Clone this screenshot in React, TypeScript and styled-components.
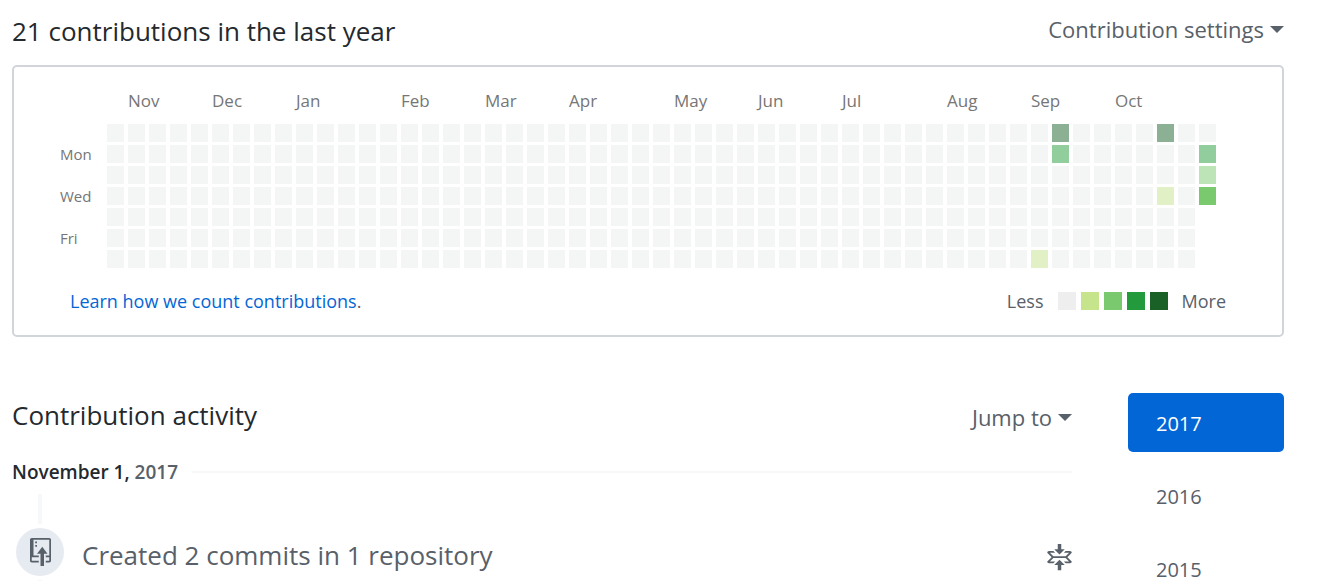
import React from 'react';
import styled, { createGlobalStyle } from 'styled-components';

const GlobalStyle = createGlobalStyle`
  * { box-sizing: border-box; }
  body {
    margin: 0;
    background: #fff;
    color: #24292e;
    font-family: 'Segoe UI', 'Open Sans', 'Noto Sans', sans-serif;
    font-size: 20px;
    line-height: 32px;
  }
  button { font: inherit; color: inherit; background: none; border: 0; padding: 0; cursor: pointer; }
`;

const Page = styled.main`
  padding: 13px 37px 0 12px;
`;

const SectionHeader = styled.div`
  display: flex;
  justify-content: space-between;
  align-items: flex-start;
`;

const Heading = styled.h2`
  margin: 0;
  font-size: 26px;
  line-height: 36px;
  font-weight: 400;
`;

const MenuButton = styled.button`
  display: flex;
  align-items: center;
  gap: 6px;
  && {
    font-size: 22px;
    line-height: 32px;
    color: #586069;
  }
  &::after {
    content: '';
    border: 7px solid transparent;
    border-top-color: currentColor;
    border-bottom-width: 0;
  }
`;

const GraphCard = styled.section`
  margin-top: 16px;
  padding: 22px 56px 18px 46px;
  border: 2px solid #d1d5da;
  border-radius: 5px;
`;

const Calendar = styled.div`
  display: grid;
  grid-template-columns: 43px repeat(53, 17px);
  grid-template-rows: 32px repeat(7, 18px);
  gap: 3px 4px;
`;

const Month = styled.span<{ $col: number }>`
  grid-row: 1;
  grid-column: ${(p) => p.$col + 2} / span 3;
  font-size: 17px;
  line-height: 24px;
  color: #767676;
`;

const Weekday = styled.span<{ $row: number }>`
  grid-column: 1;
  grid-row: ${(p) => p.$row + 2};
  font-size: 15px;
  line-height: 18px;
  color: #767676;
`;

const Day = styled.span<{ $col: number; $row: number; $fill: string }>`
  grid-column: ${(p) => p.$col + 2};
  grid-row: ${(p) => p.$row + 2};
  background: ${(p) => p.$fill};
`;

const GraphFooter = styled.div`
  display: flex;
  justify-content: space-between;
  align-items: center;
  margin-top: 17px;
  padding-left: 10px;
  font-size: 18px;
  color: #586069;
`;

const HelpLink = styled.a`
  color: #0366d6;
  text-decoration: none;
`;

const Legend = styled.div`
  display: flex;
  align-items: center;
  gap: 14px;
`;

const Swatches = styled.div`
  display: flex;
  gap: 5px;
`;

const Swatch = styled.span<{ $fill: string }>`
  width: 18px;
  height: 18px;
  background: ${(p) => p.$fill};
`;

const ActivityLayout = styled.div`
  display: grid;
  grid-template-columns: 1fr 156px;
  gap: 56px;
  margin-top: 56px;
`;

const ActivityHeader = styled(SectionHeader)`
  padding-top: 4px;
`;

const JumpMenu = styled(MenuButton)`
  margin-top: 4px;
`;

const DateRow = styled.h3`
  display: flex;
  align-items: center;
  gap: 14px;
  margin: 23px 0 0;
  font-size: 19px;
  line-height: 32px;
  font-weight: 600;
  &::after {
    content: '';
    flex: 1;
    height: 2px;
    background: #f6f8fa;
  }
`;

const DateYear = styled.span`
  color: #586069;
`;

const Timeline = styled.div`
  margin-top: 6px;
`;

const Rail = styled.div`
  width: 4px;
  height: 30px;
  margin-left: 26px;
  background: #f6f8fa;
`;

const Event = styled.div`
  display: flex;
  align-items: flex-start;
  margin: 4px 0;
  padding-left: 4px;
  color: #586069;
`;

const EventBadge = styled.span`
  display: flex;
  align-items: center;
  justify-content: center;
  width: 48px;
  height: 48px;
  border-radius: 50%;
  background: #e6ebf1;
`;

const EventTitle = styled.h4`
  flex: 1;
  margin: 0 0 0 18px;
  padding-top: 9px;
  font-size: 26px;
  line-height: 36px;
  font-weight: 400;
`;

const FoldButton = styled.button`
  display: flex;
  && {
    padding-top: 16px;
  }
`;

const Years = styled.nav`
  display: flex;
  flex-direction: column;
  gap: 14px;
`;

const YearLink = styled.a<{ $active?: boolean }>`
  padding: 15px 28px 12px;
  border-radius: 5px;
  color: ${(p) => (p.$active ? '#fff' : '#586069')};
  background: ${(p) => (p.$active ? '#0366d6' : 'transparent')};
  text-decoration: none;
`;

const months: [string, number][] = [
  ['Nov', 1], ['Dec', 5], ['Jan', 9], ['Feb', 14], ['Mar', 18], ['Apr', 22],
  ['May', 27], ['Jun', 31], ['Jul', 35], ['Aug', 40], ['Sep', 44], ['Oct', 48],
];

const weekdays: [string, number][] = [['Mon', 1], ['Wed', 3], ['Fri', 5]];

const filled: Record<string, string> = {
  '44-6': '#e2f1c5',
  '45-0': '#8cb093',
  '45-1': '#91cd9d',
  '50-0': '#8cb093',
  '50-3': '#e2f1c5',
  '52-1': '#91cd9d',
  '52-2': '#bde4b7',
  '52-3': '#7bc96f',
};

const legendFills = ['#eeeeee', '#c6e48b', '#7bc96f', '#239a3b', '#196127'];

// 52 full weeks followed by the current one, Sunday to Wednesday.
const days = Array.from({ length: 52 * 7 + 4 }, (_, i) => ({ col: Math.floor(i / 7), row: i % 7 }));

const RepoPushIcon = () => (
  <svg width="21" height="28" viewBox="0 0 12 16" fill="currentColor" aria-hidden="true">
    <path fillRule="evenodd" d="M4 3H3V2h1v1zM3 5h1V4H3v1zm4 0L4 9h2v7h2V9h2L7 5zm4-5H1C.45 0 0 .45 0 1v12c0 .55.45 1 1 1h4v-1H1v-2h4v-1H2V1h9.02L11 10H9v1h2v2H9v1h2c.55 0 1-.45 1-1V1c0-.55-.45-1-1-1z" />
  </svg>
);

const FoldIcon = () => (
  <svg width="25" height="28" viewBox="0 0 14 16" fill="currentColor" aria-hidden="true">
    <path fillRule="evenodd" d="M7 9l3 3H8v3H6v-3H4l3-3zm3-6H8V0H6v3H4l3 3 3-3zm4 2c0-.55-.45-1-1-1h-2.5l-1 1h3l-2 2h-7l-2-2h3l-1-1H1c-.55 0-1 .45-1 1l2.5 2.5L0 10c0 .55.45 1 1 1h2.5l1-1h-3l2-2h7l2 2h-3l1 1H13c.55 0 1-.45 1-1l-2.5-2.5L14 5z" />
  </svg>
);

export default function App() {
  return (
    <>
      <GlobalStyle />
      <Page>
        <SectionHeader>
          <Heading>21 contributions in the last year</Heading>
          <MenuButton type="button" aria-haspopup="menu">Contribution settings</MenuButton>
        </SectionHeader>
        <GraphCard>
          <Calendar>
            {months.map(([name, col]) => <Month key={name} $col={col}>{name}</Month>)}
            {weekdays.map(([name, row]) => <Weekday key={name} $row={row}>{name}</Weekday>)}
            {days.map(({ col, row }) => (
              <Day key={`${col}-${row}`} $col={col} $row={row} $fill={filled[`${col}-${row}`] ?? '#f4f6f6'} />
            ))}
          </Calendar>
          <GraphFooter>
            <span><HelpLink href="#help">Learn how we count contributions</HelpLink>.</span>
            <Legend>
              <span>Less</span>
              <Swatches>
                {legendFills.map((fill) => <Swatch key={fill} $fill={fill} />)}
              </Swatches>
              <span>More</span>
            </Legend>
          </GraphFooter>
        </GraphCard>
        <ActivityLayout>
          <section>
            <ActivityHeader>
              <Heading>Contribution activity</Heading>
              <JumpMenu type="button" aria-haspopup="menu">Jump to</JumpMenu>
            </ActivityHeader>
            <DateRow>
              <span>November 1, <DateYear>2017</DateYear></span>
            </DateRow>
            <Timeline>
              <Rail />
              <Event>
                <EventBadge><RepoPushIcon /></EventBadge>
                <EventTitle>Created 2 commits in 1 repository</EventTitle>
                <FoldButton type="button" aria-label="Collapse"><FoldIcon /></FoldButton>
              </Event>
              <Rail />
            </Timeline>
          </section>
          <Years aria-label="Years">
            <YearLink href="#2017" $active aria-current="page">2017</YearLink>
            <YearLink href="#2016">2016</YearLink>
            <YearLink href="#2015">2015</YearLink>
          </Years>
        </ActivityLayout>
      </Page>
    </>
  );
}
